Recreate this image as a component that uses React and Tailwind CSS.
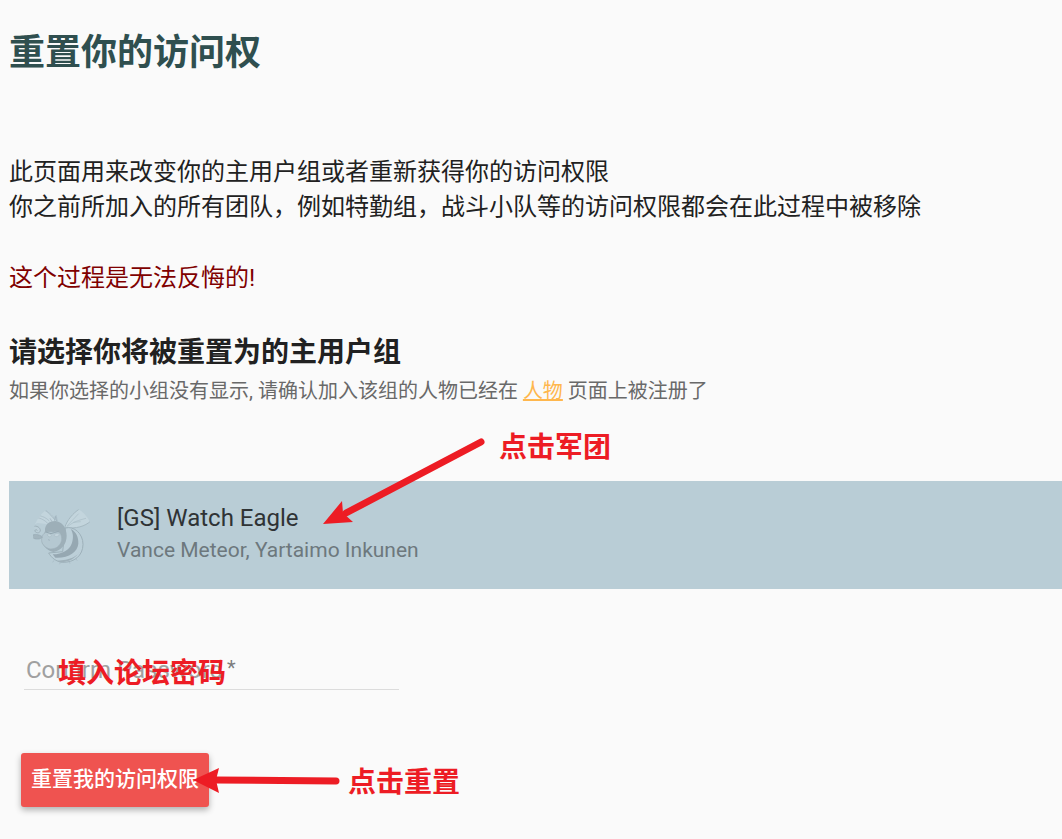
import { useState } from 'react';

const groups = [
  {
    id: 'gs',
    name: '[GS] Watch Eagle',
    characters: 'Vance Meteor, Yartaimo Inkunen'
  }
];

const BeeLogo = () => (
  <svg viewBox="39 30 180 180" className="size-15 shrink-0 rounded-full" fill="none" aria-hidden="true">
    {/* wings */}
    <path d="M62 42 C74 42 88 50 98 62 L110 78 L84 88 L52 84 L36 92 L36 60 Z" fill="#c3d5dd" />
    <path d="M36 66 C56 66 74 74 84 86 M66 44 C84 48 98 60 106 76 M76 44 L104 74 M46 62 C60 60 76 66 88 78 M108 60 L112 78" stroke="#a5b8c1" strokeWidth="2" />
    <path d="M134 98 C142 74 158 56 178 42 C194 44 206 56 212 78 C196 94 168 102 134 98 Z" fill="#c3d5dd" stroke="#a5b8c1" strokeWidth="3" />
    <path d="M140 94 L176 56 M142 95 C160 80 176 76 198 70 M160 82 L182 80" stroke="#a9bcc5" strokeWidth="2" />
    {/* body and stripes */}
    <path d="M136 99 C162 92 189 116 189 148 C189 182 162 203 128 202 C108 200 94 188 86 174 L128 170 Z" fill="#bccfd8" stroke="#9db0b9" strokeWidth="3" />
    <path d="M152 102 C168 110 176 126 175 146 C172 172 146 190 106 188 L98 178 C128 178 148 164 155 146 C161 130 160 114 152 102 Z" fill="#96a8b2" />
    <path d="M118 202 C146 202 168 190 180 168 C172 184 150 196 112 197 Z" fill="#9fb1ba" />
    {/* head */}
    <path d="M75 108 C74 90 86 78 106 78 C126 80 140 98 140 122 C140 148 124 166 100 171 C86 168 70 156 66 140 Z" fill="#9dafb8" />
    <path d="M65 132 C67 110 84 108 100 111 C116 106 127 116 125 136 C121 154 106 163 90 162 C74 158 63 146 65 132 Z" fill="#b5c8d1" stroke="#9fb1ba" strokeWidth="2" />
    <path d="M78 111 L93 116 L116 109" stroke="#95a8b2" strokeWidth="3" />
    <path d="M82 118 C88 116 94 118 94 122 C90 128 84 126 82 118 Z M102 120 C108 114 114 114 118 119 C114 126 106 127 102 120 Z" fill="#c3d4dc" stroke="#9fb1ba" strokeWidth="1" />
    <path d="M84 134 L90 136 M104 78 L106 64 L110 78 M96 80 L90 70" stroke="#9caeb8" strokeWidth="2" />
    {/* fist */}
    <path d="M38 95 C50 90 62 98 61 108 C58 116 48 114 44 108 C46 102 52 104 52 107" fill="#bccfd8" stroke="#9fb1ba" strokeWidth="3" />
    <path d="M38 120 C48 116 62 120 67 126 C62 134 46 134 38 128 Z" fill="#a3b5be" stroke="#98abb5" strokeWidth="2" />
    <path d="M102 196 L98 202 M122 202 L118 208 M148 200 L150 206 M168 192 L172 197" stroke="#a5b8c1" strokeWidth="2" />
  </svg>
);

const Note = ({ className, children }) => (
  <span className={`absolute whitespace-nowrap text-[28px] leading-8 font-bold text-[#ed1c24] pointer-events-none ${className}`}>
    {children}
  </span>
);

const App = () => {
  const [selected, setSelected] = useState('gs');
  const [password, setPassword] = useState('');

  return (
    <main className="min-h-screen overflow-x-hidden bg-[#fafafa] pl-[9px] pt-[25px] pb-8 font-[Roboto,'Noto_Sans_CJK_SC',sans-serif] text-[#212121]">
      <h1 className="text-4xl leading-14 font-bold text-[#2f4f4f]">重置你的访问权</h1>

      <div className="mt-[74px] text-2xl leading-[35px]">
        <p>此页面用来改变你的主用户组或者重新获得你的访问权限</p>
        <p>你之前所加入的所有团队，例如特勤组，战斗小队等的访问权限都会在此过程中被移除</p>
        <p className="mt-9 text-[#800000]">这个过程是无法反悔的!</p>
      </div>

      <h2 className="mt-[35px] text-[28px] leading-11 font-bold">请选择你将被重置为的主用户组</h2>
      <p className="text-xl leading-8 text-[#696969]">
        如果你选择的小组没有显示, 请确认加入该组的人物已经在{' '}
        <a href="#characters" className="text-[#ffb74d] underline">人物</a> 页面上被注册了
      </p>

      <section className="relative mt-[74px]">
        {groups.map((group) => (
          <button
            key={group.id}
            type="button"
            aria-pressed={selected === group.id}
            onClick={() => setSelected(group.id)}
            className={`flex h-27 w-full items-center gap-6 px-6 text-left ${selected === group.id ? 'bg-[#b9cdd6]' : 'bg-transparent'}`}
          >
            <BeeLogo />
            <span className="flex flex-col pb-0.5">
              <span className="text-2xl leading-8 text-[#2f3335]">{group.name}</span>
              <span className="text-[21px] leading-8 text-[#6d787d]">{group.characters}</span>
            </span>
          </button>
        ))}
        <svg viewBox="0 0 164 88" className="absolute left-[313px] -top-[44px] h-22 w-41 pointer-events-none" aria-hidden="true">
          <path d="M159 5 L24 76" stroke="#ed1c24" strokeWidth="7" strokeLinecap="round" />
          <path d="M1 87 L20 64 L21 76 L31 85 Z" fill="#ed1c24" />
        </svg>
        <Note className="left-[490px] -top-[49px]">点击军团</Note>
      </section>

      <form onSubmit={(e) => e.preventDefault()}>
        <div className="relative mt-15 ml-[15px] w-[375px] max-w-full">
          <label htmlFor="password" className="absolute left-0.5 top-[5px] flex gap-1 text-2xl leading-8 text-[#a0a0a0]">
            <span className={password ? 'invisible' : ''}>Confirm Password</span>
            <span className="text-xl leading-7 text-[#7d7d7d]">*</span>
          </label>
          <input
            id="password"
            type="password"
            required
            value={password}
            onChange={(e) => setPassword(e.target.value)}
            className="h-[41px] w-full border-b border-[#dcdcdc] bg-transparent px-0.5 text-2xl outline-none focus:border-[#ef5350]"
          />
          <Note className="left-[34px] top-[9px]">填入论坛密码</Note>
        </div>

        <div className="relative mt-[63px] ml-3 flex">
          <button
            type="submit"
            className="h-[54px] rounded-[3px] bg-[#ef5350] px-[10px] text-[21px] font-medium text-white shadow-[0_3px_6px_rgba(0,0,0,0.3)]"
          >
            重置我的访问权限
          </button>
          <svg viewBox="0 0 150 26" className="absolute left-[170px] top-[15px] h-[26px] w-[150px] pointer-events-none" aria-hidden="true">
            <path d="M24 12 L145 13" stroke="#ed1c24" strokeWidth="7" strokeLinecap="round" />
            <path d="M2 12 L28 0 L25 12 L28 25 Z" fill="#ed1c24" />
          </svg>
          <Note className="left-[327px] top-[14px]">点击重置</Note>
        </div>
      </form>
    </main>
  );
};

export default App;
